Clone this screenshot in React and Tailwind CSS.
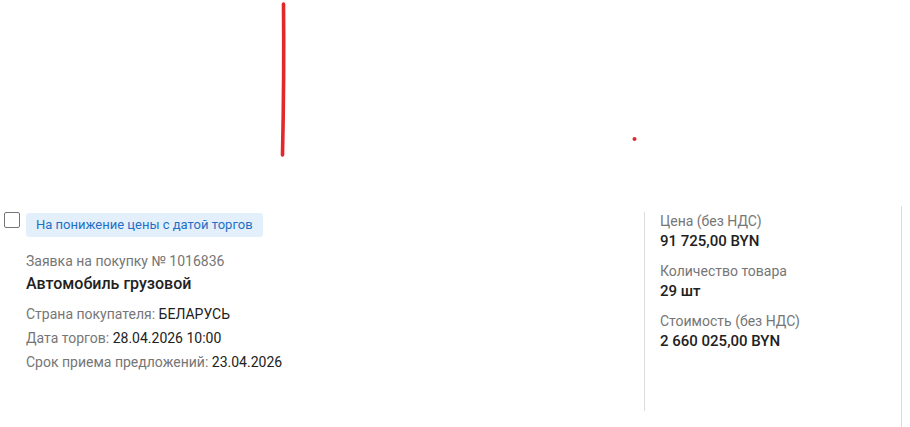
import React from "react";

const details = [
    { label: "Страна покупателя:", value: "БЕЛАРУСЬ" },
    { label: "Дата торгов:", value: "28.04.2026 10:00" },
    { label: "Срок приема предложений:", value: "23.04.2026" },
];

const prices = [
    { label: "Цена (без НДС)", value: "91 725,00 BYN" },
    { label: "Количество товара", value: "29 шт" },
    { label: "Стоимость (без НДС)", value: "2 660 025,00 BYN" },
];

export default function App() {
    return (
        <div className="w-[910px] h-[427px] bg-white overflow-hidden font-['Roboto',sans-serif]">
            {/* canvas with the hand drawn marks */}
            <div className="relative h-[206px]">
                <svg className="absolute inset-0" width="910" height="206">
                    <path
                        d="M283.5 4 C284 50 283.5 110 282.5 155"
                        stroke="#e2282a"
                        strokeWidth="3.6"
                        strokeLinecap="round"
                        fill="none"
                    />
                    <circle cx="634.5" cy="139" r="2" fill="#e2282a" />
                </svg>
            </div>

            <div className="flex h-[221px]">
                <div className="w-[645px] pt-[6px] pl-[4px]">
                    <div className="flex items-start gap-[6px]">
                        <span className="mt-0 w-4 h-4 border-[1.5px] border-[#767676] rounded-[2px] bg-white"></span>
                        <div>
                            <span className="inline-block h-6 leading-6 px-[10px] rounded-[3px] bg-[#e3f0fc] text-[#1f6fc5] text-[13px]">
                                На понижение цены с датой торгов
                            </span>
                            <p className="mt-[14px] text-[14px] leading-5 text-[#767676]">
                                Заявка на покупку № 1016836
                            </p>
                            <h2 className="mt-px text-[16px] leading-6 font-medium text-[#212121]">
                                Автомобиль грузовой
                            </h2>
                            <div className="mt-[6px]">
                                {details.map((d) => (
                                    <p key={d.label} className="text-[14px] leading-6 text-[#767676]">
                                        {d.label} <span className="text-[#212121]">{d.value}</span>
                                    </p>
                                ))}
                            </div>
                        </div>
                    </div>
                </div>

                <div className="w-[256px] mt-[6px] h-[199px] border-l border-[#dcdcdc] pl-[15px] -translate-x-px">
                    <div className="flex flex-col gap-[10px] -mt-px">
                        {prices.map((p) => (
                            <div key={p.label}>
                                <p className="text-[14px] leading-5 text-[#767676]">{p.label}</p>
                                <p className="text-[15px] leading-5 font-medium text-[#212121]">{p.value}</p>
                            </div>
                        ))}
                    </div>
                </div>

                <div className="border-l border-[#dcdcdc] h-full"></div>
            </div>
        </div>
    );
}
